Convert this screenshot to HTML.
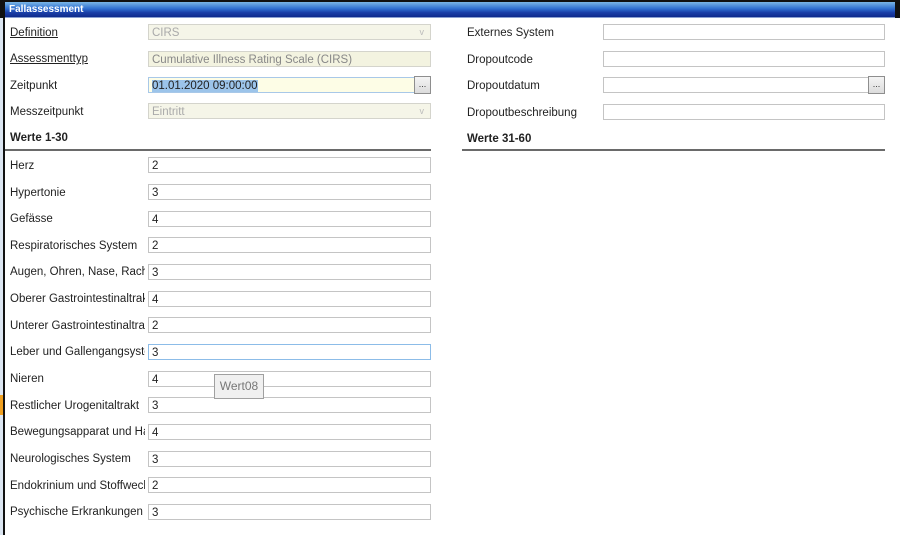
<!DOCTYPE html>
<html><head><style>
*{box-sizing:border-box;margin:0;padding:0}
body{width:900px;height:535px;background:#fff;font-family:"Liberation Sans",Arial,sans-serif;font-size:11.5px;color:#222;position:relative;overflow:hidden}
.a{position:absolute}
.lbl{position:absolute;white-space:nowrap;overflow:hidden;line-height:18px}
.inp{position:absolute;height:16px;border:1px solid #c4c4c4;background:#fff;line-height:14px;padding:1px 0 0 3px;white-space:nowrap;overflow:hidden}
.dis{background:#f5f5e8;color:#aaa;border-color:#d4d4cc}
.btn{position:absolute;width:17px;height:18px;border:1px solid #8e8e8e;background:linear-gradient(#f4f4f4,#dcdcdc);font-size:9px;text-align:center;line-height:14px;color:#333}
.h{position:absolute;font-weight:bold;line-height:18px}
.line{position:absolute;height:2px;background:#6a6a6a}
.chev{position:absolute;right:6px;top:0;color:#bbb;font-size:9px}
</style></head><body>
<div class="a" style="left:0;top:0;width:900px;height:18px;background:#111"></div>
<div class="a" style="left:5px;top:2px;width:890px;height:16px;background:linear-gradient(#7ab6e6,#2f6fd0 45%,#1a3fa8 70%,#0f2a8c);border-bottom:1px solid #8aa0d0"></div>
<div class="a" style="left:9px;top:3px;color:#fff;font-weight:bold;font-size:10px;line-height:13px">Fallassessment</div>
<div class="a" style="left:0;top:18px;width:3px;height:517px;background:#dce6f2"></div>
<div class="a" style="left:0;top:395px;width:3px;height:20px;background:#f0a020"></div>
<div class="a" style="left:3px;top:18px;width:2px;height:517px;background:#111"></div>

<div class="lbl" style="left:10px;top:24px;text-decoration:underline">Definition</div>
<div class="inp dis" style="left:148px;top:24px;width:283px">CIRS<span class="chev">v</span></div>
<div class="lbl" style="left:10px;top:50px;text-decoration:underline">Assessmenttyp</div>
<div class="inp dis" style="left:148px;top:51px;width:283px;color:#888;background:#f3f3e0">Cumulative Illness Rating Scale (CIRS)</div>
<div class="lbl" style="left:10px;top:77px">Zeitpunkt</div>
<div class="inp" style="left:148px;top:77px;width:267px;background:#fdfde6;border-color:#a8c8e8"><span style="background:#9cc4ea">01.01.2020 09:00:00</span></div>
<div class="btn" style="left:414px;top:76px">...</div>
<div class="lbl" style="left:10px;top:103px">Messzeitpunkt</div>
<div class="inp dis" style="left:148px;top:103px;width:283px">Eintritt<span class="chev">v</span></div>
<div class="h" style="left:10px;top:129px">Werte 1-30</div>
<div class="line" style="left:5px;top:149px;width:426px"></div>

<div class="lbl" style="left:467px;top:24px">Externes System</div>
<div class="inp" style="left:603px;top:24px;width:282px"></div>
<div class="lbl" style="left:467px;top:51px">Dropoutcode</div>
<div class="inp" style="left:603px;top:51px;width:282px"></div>
<div class="lbl" style="left:467px;top:77px">Dropoutdatum</div>
<div class="inp" style="left:603px;top:77px;width:266px"></div>
<div class="btn" style="left:868px;top:76px">...</div>
<div class="lbl" style="left:467px;top:104px">Dropoutbeschreibung</div>
<div class="inp" style="left:603px;top:104px;width:282px"></div>
<div class="h" style="left:467px;top:130px">Werte 31-60</div>
<div class="line" style="left:462px;top:149px;width:423px"></div>

<div class="lbl" style="left:10px;top:157px;width:135px">Herz</div><div class="inp" style="left:148px;top:157px;width:283px">2</div>
<div class="lbl" style="left:10px;top:184px;width:135px">Hypertonie</div><div class="inp" style="left:148px;top:184px;width:283px">3</div>
<div class="lbl" style="left:10px;top:210px;width:135px">Gefässe</div><div class="inp" style="left:148px;top:211px;width:283px">4</div>
<div class="lbl" style="left:10px;top:237px;width:135px">Respiratorisches System</div><div class="inp" style="left:148px;top:237px;width:283px">2</div>
<div class="lbl" style="left:10px;top:263px;width:135px">Augen, Ohren, Nase, Rachen</div><div class="inp" style="left:148px;top:264px;width:283px">3</div>
<div class="lbl" style="left:10px;top:290px;width:135px">Oberer Gastrointestinaltrakt</div><div class="inp" style="left:148px;top:291px;width:283px">4</div>
<div class="lbl" style="left:10px;top:317px;width:135px">Unterer Gastrointestinaltrakt</div><div class="inp" style="left:148px;top:317px;width:283px">2</div>
<div class="lbl" style="left:10px;top:343px;width:135px">Leber und Gallengangsystem</div><div class="inp" style="left:148px;top:344px;width:283px;border-color:#8cbce8">3</div>
<div class="lbl" style="left:10px;top:370px;width:135px">Nieren</div><div class="inp" style="left:148px;top:371px;width:283px">4</div>
<div class="lbl" style="left:10px;top:397px;width:135px">Restlicher Urogenitaltrakt</div><div class="inp" style="left:148px;top:397px;width:283px">3</div>
<div class="lbl" style="left:10px;top:423px;width:135px">Bewegungsapparat und Haut</div><div class="inp" style="left:148px;top:424px;width:283px">4</div>
<div class="lbl" style="left:10px;top:450px;width:135px">Neurologisches System</div><div class="inp" style="left:148px;top:451px;width:283px">3</div>
<div class="lbl" style="left:10px;top:477px;width:135px">Endokrinium und Stoffwechsel</div><div class="inp" style="left:148px;top:477px;width:283px">2</div>
<div class="lbl" style="left:10px;top:503px;width:135px">Psychische Erkrankungen</div><div class="inp" style="left:148px;top:504px;width:283px">3</div>

<div class="a" style="left:214px;top:374px;width:50px;height:25px;border:1px solid #a0a0a0;background:#f0f0f0;color:#777;font-size:12px;line-height:23px;text-align:center">Wert08</div>
</body></html>
